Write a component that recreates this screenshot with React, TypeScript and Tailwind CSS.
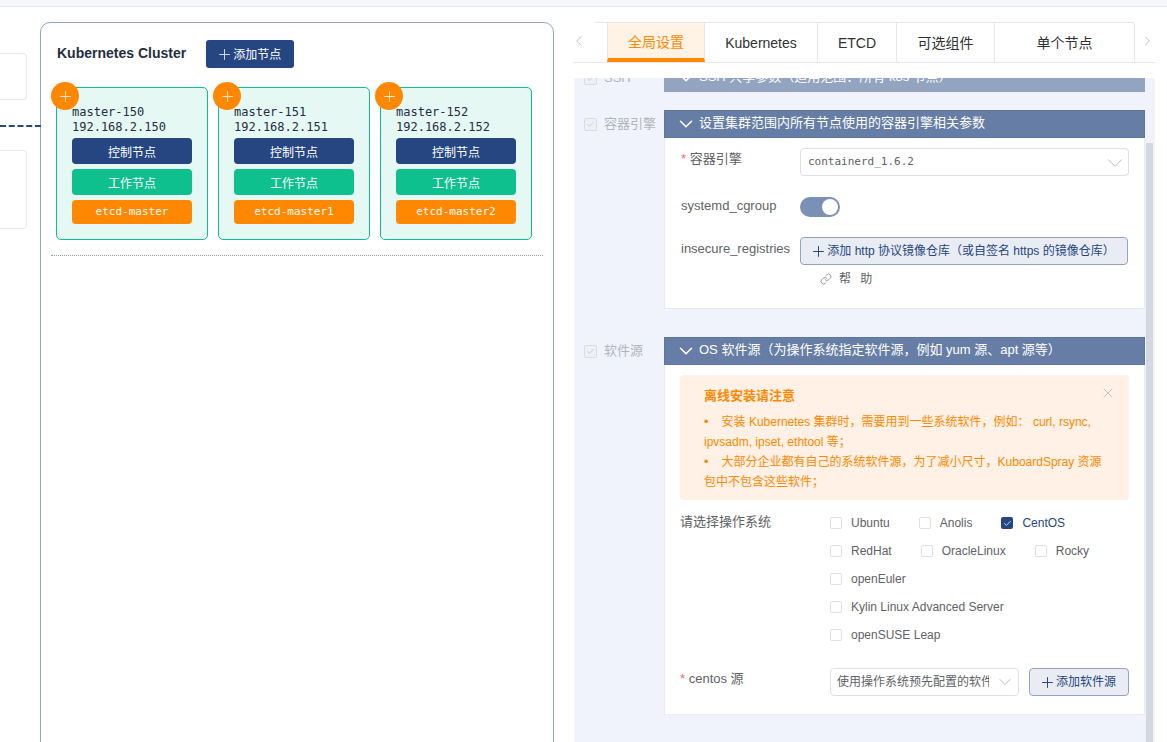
import { Check, ChevronDown, ChevronLeft, ChevronRight, Link, Plus, X } from "lucide-react";

const sans = "font-['Liberation_Sans','Noto_Sans_CJK_SC',sans-serif]";
const mono = "font-['DejaVu_Sans_Mono','Noto_Sans_CJK_SC',monospace]";

const nodes = [
  { name: "master-150", ip: "192.168.2.150", etcd: "etcd-master" },
  { name: "master-151", ip: "192.168.2.151", etcd: "etcd-master1" },
  { name: "master-152", ip: "192.168.2.152", etcd: "etcd-master2" },
];

const tabs = [
  { label: "全局设置", width: "w-[98px]", active: true },
  { label: "Kubernetes", width: "w-[113px]" },
  { label: "ETCD", width: "w-[79px]" },
  { label: "可选组件", width: "w-[98px]" },
  { label: "单个节点", width: "w-[139px]" },
];

const osRows = [
  [
    { name: "Ubuntu" },
    { name: "Anolis" },
    { name: "CentOS", checked: true },
  ],
  [{ name: "RedHat" }, { name: "OracleLinux" }, { name: "Rocky" }],
  [{ name: "openEuler" }],
  [{ name: "Kylin Linux Advanced Server" }],
  [{ name: "openSUSE Leap" }],
];

function NodeCard({ node }: { node: (typeof nodes)[number] }) {
  return (
    <div className="relative h-[153px] w-[152px] rounded-[5px] border border-[#10c090] bg-[#e6f8f3] pl-[15px] pr-[15px] pt-[17px]">
      <div className="absolute -left-[6px] -top-[6px] flex h-[28px] w-[28px] items-center justify-center rounded-full bg-[#ff8800]">
        <Plus size={17} strokeWidth={1.4} className="text-[#ffe6c8]" />
      </div>
      <div className={`${mono} text-[12px] leading-[15px] text-[#242e42]`}>
        <div>{node.name}</div>
        <div>{node.ip}</div>
      </div>
      <div className="mt-[3px] flex flex-col gap-[5px]">
        <div className={`${sans} flex h-[26px] items-center justify-center rounded-[4px] bg-[#254681] pt-[3px] text-[12px] text-white`}>控制节点</div>
        <div className={`${sans} flex h-[26px] items-center justify-center rounded-[4px] bg-[#0fc08f] pt-[3px] text-[12px] text-white`}>工作节点</div>
        <div className={`${mono} flex h-[24px] items-center justify-center rounded-[4px] bg-[#ff8800] pt-[1px] text-[11px] text-white`}>{node.etcd}</div>
      </div>
    </div>
  );
}

function SideCheck({ label }: { label: string }) {
  return (
    <div className="flex h-[28px] w-[90px] items-center pl-[10px]">
      <span className="flex h-[13px] w-[13px] items-center justify-center rounded-[2px] border border-[#d9dce6] bg-[#eef0f5]">
        <Check size={9} strokeWidth={1.5} className="text-[#b4b8c2]" />
      </span>
      <span className="ml-[7px] whitespace-nowrap text-[13px] text-[#b2b5bb]">{label}</span>
    </div>
  );
}

function SectionHeader({ title, faded }: { title: string; faded?: boolean }) {
  return (
    <div className={`flex h-[28px] w-[481px] items-center border pb-[1px] pl-[10px] text-[13px] text-white ${faded ? "border-[#92a4c0] bg-[#92a4c0]" : "border-[#5d769f] bg-[#667ea6]"}`}>
      <ChevronDown size={22} strokeWidth={1.7} className="shrink-0" />
      <span className="ml-[2px] whitespace-nowrap pb-[1px]">{title}</span>
    </div>
  );
}

function OsOption({ name, checked }: { name: string; checked?: boolean }) {
  return (
    <div className="mr-[29px] flex items-center">
      {checked ? (
        <span className="flex h-[12px] w-[12px] items-center justify-center rounded-[2px] bg-[#254681]">
          <Check size={9} strokeWidth={2} className="text-white" />
        </span>
      ) : (
        <span className="h-[12px] w-[12px] rounded-[2px] border border-[#dcdfe6] bg-white" />
      )}
      <span className={`ml-[9px] whitespace-nowrap text-[12px] ${checked ? "text-[#254681]" : "text-[#606266]"}`}>{name}</span>
    </div>
  );
}

export default function App() {
  return (
    <div className={`${sans} flex h-[742px] w-[1167px] flex-col overflow-hidden bg-white`}>
      <div className="h-[7px] shrink-0 border-b border-[#e4e7ee] bg-[#f5f7fa]" />

      <div className="flex min-h-0 flex-1">
        {/* Left canvas */}
        <div className="relative w-[574px] shrink-0 pt-[15px]">
          <div className="absolute left-0 top-[46px] h-[47px] w-[27px] rounded-r-[4px] border border-l-0 border-[#e8eaf0]" />
          <div className="absolute left-0 top-[143px] h-[79px] w-[27px] rounded-r-[4px] border border-l-0 border-[#e8eaf0]" />
          <div className="absolute left-0 top-[118px] w-[41px] border-t-2 border-dashed border-[#254681]" />

          <div className="ml-[40px] h-[800px] w-[514px] rounded-[10px] border border-[#92a4c4] px-[10px] pt-[17px]">
            <div className="flex h-[28px] items-center pl-[6px]">
              <span className="pb-[2px] text-[14px] font-bold text-[#242e42]">Kubernetes Cluster</span>
              <div className="ml-[20px] flex h-[28px] w-[88px] items-center justify-center rounded-[3px] bg-[#254681] pr-[3px] pt-[1px] text-[12px] text-white">
                <Plus size={17} strokeWidth={1.4} className="text-[#cfd8e8]" />
                添加节点
              </div>
            </div>
            <div className="ml-[5px] mt-[19px] flex gap-[10px]">
              {nodes.map((node) => (
                <NodeCard key={node.name} node={node} />
              ))}
            </div>
            <div className="mt-[15px] w-[492px] border-t border-dotted border-[#8d9bb5]" />
          </div>
        </div>

        {/* Right settings */}
        <div className="flex w-[581px] shrink-0 flex-col pt-[15px]">
          <div className="flex h-[41px] shrink-0 border-b border-[#e4e7ee]">
            <div className="flex w-[20px] shrink-0 items-start pt-[10px] text-[#b0b3b9]">
              <ChevronLeft size={18} strokeWidth={1.1} className="-ml-[4px]" />
            </div>
            <div className="flex w-[541px] shrink-0 rounded-tr-[4px] border-r border-t border-[#e4e7ee] pl-[13px]">
              {tabs.map((tab) => (
                <div
                  key={tab.label}
                  className={`flex shrink-0 items-center justify-center text-[14px] ${tab.width} ${
                    tab.active
                      ? "border-x border-[#e4e7ee] border-b-[4px] border-b-[#ff8800] bg-[#fff3e6] pt-[4px] text-[#ff8800]"
                      : "border-r border-[#e4e7ee] pt-[1px] text-[#303133]"
                  } last:border-r-0`}
                >
                  {tab.label}
                </div>
              ))}
            </div>
            <div className="flex w-[20px] shrink-0 items-start pl-[5px] pt-[10px] text-[#a0a4ab]">
              <ChevronRight size={18} strokeWidth={1.1} />
            </div>
          </div>
          <div className="h-[15px] shrink-0" />

          <div className="relative min-h-0 flex-1 overflow-hidden bg-[#f0f3fb]">
            <div className="absolute right-[2px] top-[65px] h-[640px] w-[7px] bg-[#d3d7e2]" />

            <div className="-mt-[14px] flex">
              <SideCheck label="SSH" />
              <SectionHeader faded title="SSH 共享参数（适用范围：所有 k8s 节点）" />
            </div>

            <div className="mt-[18px] flex">
              <SideCheck label="容器引擎" />
              <div>
                <SectionHeader title="设置集群范围内所有节点使用的容器引擎相关参数" />
                <div className="h-[171px] w-[481px] border border-t-0 border-[#e8ebf3] bg-white pl-[16px] pt-[10px] text-[13px] text-[#606266]">
                  <div className="flex">
                    <span className="w-[119px] pt-[1px]">
                      <span className="text-[#f56c6c]">*</span> 容器引擎
                    </span>
                    <div className={`${mono} flex h-[28px] w-[329px] items-center justify-between rounded-[4px] border border-[#dcdfe6] pl-[7px] pt-[1px] text-[11px] text-[#606266]`}>
                      containerd_1.6.2
                      <ChevronDown size={26} strokeWidth={0.8} className="text-[#a8abb2]" />
                    </div>
                  </div>
                  <div className="mt-[21px] flex h-[20px] items-center">
                    <span className="w-[119px] pb-[2px]">systemd_cgroup</span>
                    <div className="flex h-[20px] w-[40px] items-center justify-end rounded-full bg-[#7b90b5] pr-[2px]">
                      <span className="h-[16px] w-[16px] rounded-full bg-white" />
                    </div>
                  </div>
                  <div className="mt-[20px] flex">
                    <span className="w-[119px] pt-[2px]">insecure_registries</span>
                    <div>
                      <div className="flex h-[28px] w-[328px] items-center justify-center rounded-[4px] border border-[#92a4c4] bg-[#e9ecf3] pr-[3px] text-[12px] text-[#254681]">
                        <Plus size={17} strokeWidth={1.4} />
                        <span className="whitespace-nowrap">添加 http 协议镜像仓库（或自签名 https 的镜像仓库）</span>
                      </div>
                      <div className="ml-[20px] mt-[5px] flex items-center text-[12px] tracking-[3px] text-[#606266]">
                        <Link size={12} strokeWidth={1.25} className="mr-[7px]" />
                        帮 助
                      </div>
                    </div>
                  </div>
                </div>
              </div>
            </div>

            <div className="mt-[28px] flex">
              <SideCheck label="软件源" />
              <div>
                <SectionHeader title="OS 软件源（为操作系统指定软件源，例如 yum 源、apt 源等）" />
                <div className="h-[350px] w-[481px] border border-t-0 border-[#e8ebf3] bg-white pl-[15px] pt-[10px] text-[13px] text-[#606266]">
                  <div className="relative h-[125px] w-[449px] rounded-[4px] bg-[#fff1e5] px-[24px] pt-[11px] text-[#ff8800]">
                    <X size={16} strokeWidth={1} className="absolute right-[13px] top-[10px] text-[#a8abb2]" />
                    <div className="text-[13px] font-bold leading-[19px]">离线安装请注意</div>
                    <ul className="mt-[7px] text-[12px] leading-[20px]">
                      <li>
                        <span className="mr-[13px] text-[13px]">•</span>
                        安装 Kubernetes 集群时，需要用到一些系统软件，例如： curl, rsync, ipvsadm, ipset, ethtool 等；
                      </li>
                      <li>
                        <span className="mr-[13px] text-[13px]">•</span>
                        大部分企业都有自己的系统软件源，为了减小尺寸，KuboardSpray 资源包中不包含这些软件；
                      </li>
                    </ul>
                  </div>

                  <div className="mt-[9px] flex">
                    <span className="w-[150px] pt-[3px] text-[13px]">请选择操作系统</span>
                    <div className="flex flex-col">
                      {osRows.map((row) => (
                        <div key={row[0].name} className="flex h-[28px] items-center">
                          {row.map((os) => (
                            <OsOption key={os.name} name={os.name} checked={"checked" in os ? Boolean(os.checked) : false} />
                          ))}
                        </div>
                      ))}
                    </div>
                  </div>

                  <div className="mt-[19px] flex">
                    <span className="w-[150px] pt-[1px]">
                      <span className="text-[#f56c6c]">*</span> centos 源
                    </span>
                    <div className="flex h-[28px] w-[189px] items-center rounded-[4px] border border-[#dcdfe6] pl-[6px] pr-[3px] text-[12px]">
                      <span className="w-[152px] overflow-hidden whitespace-nowrap">使用操作系统预先配置的软件源</span>
                      <ChevronDown size={20} strokeWidth={1} className="ml-[6px] shrink-0 text-[#a8abb2]" />
                    </div>
                    <div className="ml-[10px] flex h-[28px] w-[100px] items-center justify-center rounded-[4px] border border-[#92a4c4] bg-[#e9ecf3] pr-[3px] text-[12px] text-[#254681]">
                      <Plus size={17} strokeWidth={1.4} />
                      添加软件源
                    </div>
                  </div>
                </div>
              </div>
            </div>
          </div>
        </div>
      </div>
    </div>
  );
}
